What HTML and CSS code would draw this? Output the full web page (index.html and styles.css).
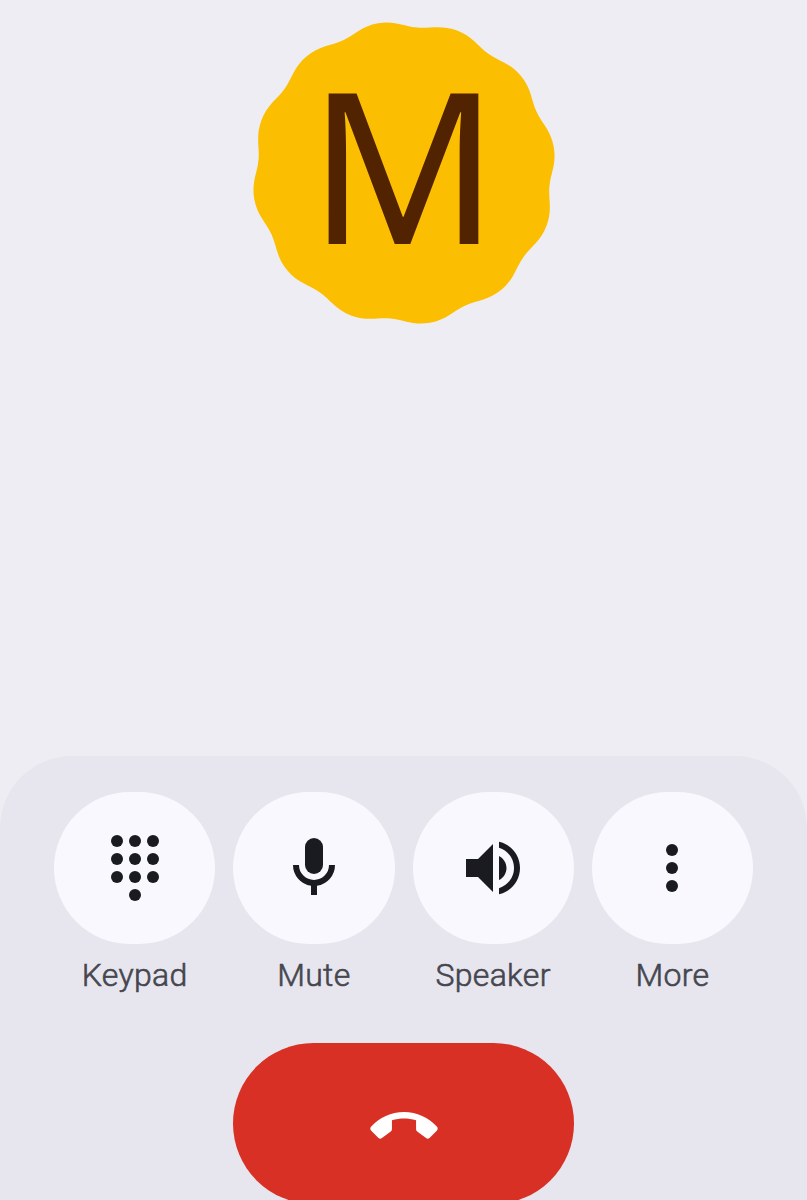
FILE: index.html
```html
<!DOCTYPE html>
<html lang="en">

<head>
    <meta charset="UTF-8">
    <meta name="viewport" content="width=device-width, initial-scale=1.0">
    <title>Call</title>
    <link rel="stylesheet" href="styles.css">
</head>

<body>
    <main class="call">
        <div class="avatar">
            <!-- one lobe, repeated every 30 degrees -->
            <svg class="avatar-shape" viewBox="-152 -152 304 304" aria-hidden="true">
                <defs>
                    <path id="lobe" d="M0 0L-37.79-141.03C-25.23-144.4-17-152 0-152S25.23-144.4 37.79-141.03Z" />
                </defs>
                <g transform="rotate(-9.8)">
                    <circle r="145.8" />
                    <use href="#lobe" />
                    <use href="#lobe" transform="rotate(30)" />
                    <use href="#lobe" transform="rotate(60)" />
                    <use href="#lobe" transform="rotate(90)" />
                    <use href="#lobe" transform="rotate(120)" />
                    <use href="#lobe" transform="rotate(150)" />
                    <use href="#lobe" transform="rotate(180)" />
                    <use href="#lobe" transform="rotate(210)" />
                    <use href="#lobe" transform="rotate(240)" />
                    <use href="#lobe" transform="rotate(270)" />
                    <use href="#lobe" transform="rotate(300)" />
                    <use href="#lobe" transform="rotate(330)" />
                </g>
            </svg>
            <span class="avatar-letter">M</span>
        </div>

        <section class="controls">
            <div class="actions">
                <button class="action">
                    <span class="action-button">
                        <svg class="icon" viewBox="0 0 24 24">
                            <circle cx="6" cy="3" r="2" />
                            <circle cx="12" cy="3" r="2" />
                            <circle cx="18" cy="3" r="2" />
                            <circle cx="6" cy="9" r="2" />
                            <circle cx="12" cy="9" r="2" />
                            <circle cx="18" cy="9" r="2" />
                            <circle cx="6" cy="15" r="2" />
                            <circle cx="12" cy="15" r="2" />
                            <circle cx="18" cy="15" r="2" />
                            <circle cx="12" cy="21" r="2" />
                        </svg>
                    </span>
                    <span class="action-label">Keypad</span>
                </button>
                <button class="action">
                    <span class="action-button">
                        <svg class="icon" viewBox="0 0 24 24">
                            <rect x="9" y="2" width="6" height="12" rx="3" />
                            <path d="M17 11a5 5 0 0 1-10 0H5a7 7 0 0 0 6 6.93V21h2v-3.07A7 7 0 0 0 19 11z" />
                        </svg>
                    </span>
                    <span class="action-label">Mute</span>
                </button>
                <button class="action">
                    <span class="action-button">
                        <svg class="icon" viewBox="0 0 24 24">
                            <path d="M3 9v6h4l5 5V4L7 9H3zm13.5 3c0-1.77-1.02-3.29-2.5-4.03v8.05c1.48-.73 2.5-2.25 2.5-4.02zM14 3.23v2.06c2.89.86 5 3.54 5 6.71s-2.11 5.85-5 6.71v2.06c4.01-.91 7-4.49 7-8.77s-2.99-7.86-7-8.77z" />
                        </svg>
                    </span>
                    <span class="action-label">Speaker</span>
                </button>
                <button class="action">
                    <span class="action-button">
                        <svg class="icon" viewBox="0 0 24 24">
                            <circle cx="12" cy="6" r="2" />
                            <circle cx="12" cy="12" r="2" />
                            <circle cx="12" cy="18" r="2" />
                        </svg>
                    </span>
                    <span class="action-label">More</span>
                </button>
            </div>

            <button class="end-call" aria-label="End call">
                <svg class="icon" viewBox="0 0 24 24">
                    <path d="M12 8C7.7 8 3.8 9.8 1 12.95c-.3.35-.3.85 0 1.2l2.5 2.5c.35.33.8.33 1.15.03l2.95-2.2c.25-.2.38-.45.38-.75V10.75C9.3 10.35 10.7 10.2 12 10.2s2.7.15 4.02.55v2.98c0 .3.13.55.38.75l2.95 2.2c.35.3.8.3 1.15-.03l2.5-2.5c.3-.35.3-.85 0-1.2C20.2 9.8 16.3 8 12 8z" />
                </svg>
            </button>
        </section>
    </main>
</body>

</html>
```
FILE: styles.css
```css
* {
    box-sizing: border-box;
}

body {
    margin: 0;
    background: #eeedf3;
    font-family: Roboto, sans-serif;
}

button {
    padding: 0;
    border: 0;
    background: none;
    font: inherit;
}

.call {
    height: 1200px;
    padding-top: 21px;
    display: flex;
    flex-direction: column;
    align-items: center;
    justify-content: space-between;
    overflow: hidden;
}

.avatar {
    width: 304px;
    height: 304px;
    display: grid;
    place-items: center;
}

.avatar-shape,
.avatar-letter {
    grid-area: 1 / 1;
}

.avatar-shape {
    width: 304px;
    height: 304px;
    fill: #fcbe00;
}

.avatar-letter {
    color: #522300;
    font-family: "Noto Sans", sans-serif;
    font-size: 210px;
    line-height: 280px;
    padding-bottom: 21px;
}

.controls {
    width: 100%;
    height: 444px;
    padding: 36px 54px 0;
    display: flex;
    flex-direction: column;
    align-items: center;
    border-radius: 72px 72px 0 0;
    background: #e7e6ee;
}

.actions {
    width: 100%;
    display: grid;
    grid-template-columns: repeat(4, 1fr);
    gap: 18px;
}

.action {
    display: flex;
    flex-direction: column;
    align-items: center;
}

.action-button {
    width: 100%;
    height: 152px;
    display: flex;
    align-items: center;
    justify-content: center;
    border-radius: 76px;
    background: #f9f8ff;
}

.icon {
    width: 72px;
    height: 72px;
    fill: #1a1b20;
}

.action-label {
    margin-top: 12px;
    color: #45464f;
    font-size: 32px;
    font-weight: 300;
    line-height: 39px;
    letter-spacing: 0.3px;
    -webkit-text-stroke: 0.6px #45464f;
}

.end-call {
    width: 341px;
    height: 161px;
    margin-top: 48px;
    flex-shrink: 0;
    display: flex;
    align-items: center;
    justify-content: center;
    border-radius: 81px;
    background: #d93025;
}

.end-call .icon {
    fill: #fff;
}
```
